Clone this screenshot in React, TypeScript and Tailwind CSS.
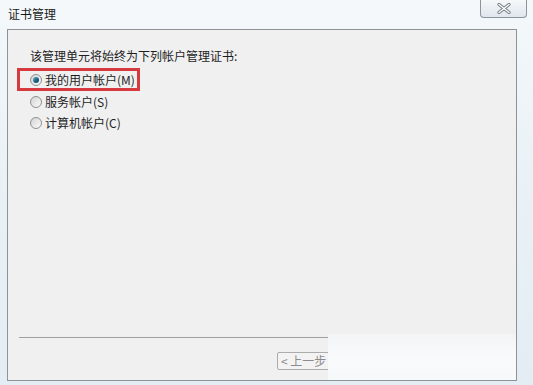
import React from 'react';

const Radio: React.FC<{ checked?: boolean }> = ({ checked }) => (
  <span className="relative flex h-[12px] w-[12px] shrink-0 items-center justify-center rounded-full border border-[#8e8f8f] bg-gradient-to-br from-[#d4d4d4] to-[#fbfbfb]">
    {checked && (
      <span className="h-[6px] w-[6px] rounded-full bg-gradient-to-br from-[#6fb2d0] via-[#1f6a8c] to-[#0e3f5c]" />
    )}
  </span>
);

const Row: React.FC<{ label: string; checked?: boolean }> = ({ label, checked }) => (
  <div className="flex h-[16px] items-center gap-[3px]">
    <Radio checked={checked} />
    <span className="text-[12px] leading-[16px] text-[#1e1e1e]">{label}</span>
  </div>
);

export default function App() {
  return (
    <div
      className="flex h-[385px] w-[533px] flex-col overflow-hidden bg-gradient-to-b from-[#f4f8fb] via-[#e9f1f6] to-[#e3edf3]"
      style={{ fontFamily: '"Noto Sans CJK SC", "Noto Sans", sans-serif' }}
    >
      {/* Title bar */}
      <div className="flex h-[29px] shrink-0 items-start justify-between pl-[8px] pr-[6px]">
        <span className="mt-[6px] text-[12px] leading-[16px] text-[#1a1a1a]">证书管理</span>
        <button className="flex h-[18px] w-[47px] items-center justify-center rounded-b-[4px] border border-t-0 border-[#8d959c] bg-gradient-to-b from-[#f6f8fa] to-[#dfe6ec]">
          <svg width="14" height="11" viewBox="0 0 14 11">
            <path d="M2 1.5 L12 9.5 M12 1.5 L2 9.5" stroke="#6f7a82" strokeWidth="3.2" strokeLinecap="round" />
            <path d="M2 1.5 L12 9.5 M12 1.5 L2 9.5" stroke="#ffffff" strokeWidth="1.4" strokeLinecap="round" />
          </svg>
        </button>
      </div>

      {/* Main panel */}
      <div className="relative mb-[4px] ml-[7px] mr-[16px] flex flex-1 flex-col border border-[#8f9396] bg-[#f0f0f0]">
        <div className="pl-[22px] pt-[18px]">
          <div className="text-[12px] leading-[16px] text-[#1e1e1e]">该管理单元将始终为下列帐户管理证书:</div>
        </div>

        <div className="ml-[9px] mt-[4px] flex h-[23px] w-[123px] items-center border-[3px] border-[#d6393e] pl-[10px]">
          <Row label="我的用户帐户(M)" checked />
        </div>

        <div className="ml-[22px] mt-[3px] flex flex-col gap-[5px]">
          <Row label="服务帐户(S)" />
          <Row label="计算机帐户(C)" />
        </div>

        <div className="flex-1" />

        {/* Bottom area */}
        <div className="mx-[11px] h-px bg-[#a0a0a0]" />
        <div className="flex h-[42px] items-start pl-[269px] pt-[14px]">
          <button className="flex h-[18px] w-[60px] items-center rounded-[2px] border border-[#acacac] bg-[#f3f3f3] pl-[3px] text-[12px] leading-[16px] text-[#8c8c8c]">
            &lt; 上一步
          </button>
        </div>

        {/* blurred overlay in lower right */}
        <div className="absolute bottom-0 right-0 h-[46px] w-[188px] bg-gradient-to-b from-[#f2f4f5] via-[#f9fafb] to-[#f6f9fa]" />
      </div>
    </div>
  );
}
